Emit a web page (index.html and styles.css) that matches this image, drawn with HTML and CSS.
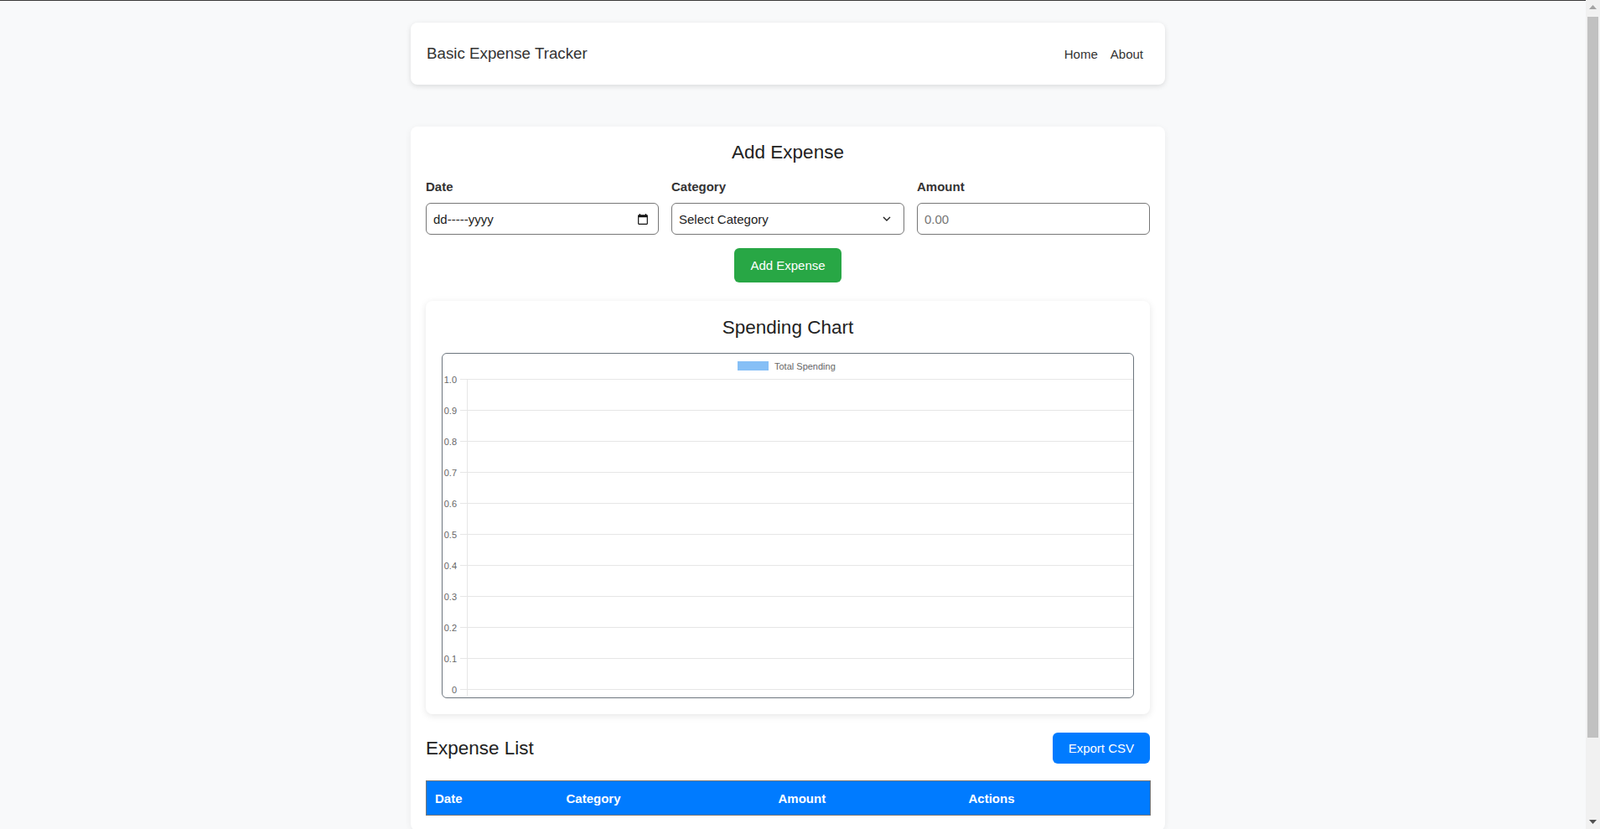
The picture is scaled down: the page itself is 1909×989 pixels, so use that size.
FILE: index.html
```html
<!DOCTYPE html>
<html lang="en">
<head>
<meta charset="utf-8">
<title>Basic Expense Tracker</title>
<link rel="stylesheet" href="styles.css">
</head>
<body>
<div class="topline"></div>
<div class="page">
<div class="container">
  <nav class="navbar">
    <span class="brand">Basic Expense Tracker</span>
    <div class="nav-links"><a href="#">Home</a><a href="#">About</a></div>
  </nav>

  <main class="card">
    <h2 class="section-title">Add Expense</h2>
    <form class="expense-form">
      <div class="fields">
        <div class="field">
          <label>Date</label>
          <div class="input date-input">
            <span>dd-----yyyy</span>
            <svg class="cal-icon" width="12" height="13" viewBox="2 1 20 22" aria-hidden="true"><path d="M20 3h-1V1h-2v2H7V1H5v2H4c-1.1 0-2 .9-2 2v16c0 1.1.9 2 2 2h16c1.1 0 2-.9 2-2V5c0-1.1-.9-2-2-2zm0 18H4V8h16v13z" fill="#111"/></svg>
          </div>
        </div>
        <div class="field">
          <label for="category">Category</label>
          <div class="select-wrap">
            <select id="category" class="input select"><option>Select Category</option></select>
            <svg class="chevron" width="10" height="6" viewBox="0 0 10 6" aria-hidden="true"><path d="M1 1l4 4 4-4" fill="none" stroke="#222" stroke-width="1.4"/></svg>
          </div>
        </div>
        <div class="field">
          <label for="amount">Amount</label>
          <input id="amount" class="input" type="text" placeholder="0.00">
        </div>
      </div>
      <div class="actions"><button class="btn btn-green" type="button">Add Expense</button></div>
    </form>

    <section class="chart-card">
      <h2 class="section-title chart-title">Spending Chart</h2>
      <div class="chart-box">
        <svg class="chart" viewBox="0 0 824 410" preserveAspectRatio="none">
          <rect x="352" y="9" width="37" height="11" fill="#86bff6"/>
          <text x="396" y="18.5" class="legend">Total Spending</text>
          <g class="grid">
            <line x1="21" x2="824" y1="30.5" y2="30.5"/>
            <line x1="21" x2="824" y1="67.5" y2="67.5"/>
            <line x1="21" x2="824" y1="104.5" y2="104.5"/>
            <line x1="21" x2="824" y1="141.5" y2="141.5"/>
            <line x1="21" x2="824" y1="178.5" y2="178.5"/>
            <line x1="21" x2="824" y1="215.5" y2="215.5"/>
            <line x1="21" x2="824" y1="252.5" y2="252.5"/>
            <line x1="21" x2="824" y1="289.5" y2="289.5"/>
            <line x1="21" x2="824" y1="326.5" y2="326.5"/>
            <line x1="21" x2="824" y1="363.5" y2="363.5"/>
            <line x1="21" x2="824" y1="400.5" y2="400.5"/>
            <line x1="29.5" x2="29.5" y1="30" y2="408"/>
          </g>
          <g class="ticks">
            <text x="17" y="34.5">1.0</text>
            <text x="17" y="71.5">0.9</text>
            <text x="17" y="108.5">0.8</text>
            <text x="17" y="145.5">0.7</text>
            <text x="17" y="182.5">0.6</text>
            <text x="17" y="219.5">0.5</text>
            <text x="17" y="256.5">0.4</text>
            <text x="17" y="293.5">0.3</text>
            <text x="17" y="330.5">0.2</text>
            <text x="17" y="367.5">0.1</text>
            <text x="17" y="404.5">0</text>
          </g>
        </svg>
      </div>
    </section>

    <div class="list-header">
      <h2 class="list-title">Expense List</h2>
      <button class="btn btn-blue" type="button">Export CSV</button>
    </div>
    <table class="expense-table">
      <colgroup><col class="c-date"><col class="c-cat"><col class="c-amt"><col class="c-act"></colgroup>
      <thead><tr><th>Date</th><th>Category</th><th>Amount</th><th>Actions</th></tr></thead>
      <tbody></tbody>
    </table>
  </main>
</div>
</div>

<div class="scrollbar" aria-hidden="true">
  <div class="sb-btn"><svg width="9" height="5" viewBox="0 0 9 5"><path d="M0 5L4.5 0 9 5z" fill="#a3a3a3"/></svg></div>
  <div class="sb-track"><div class="sb-thumb"></div></div>
  <div class="sb-btn"><svg width="9" height="5" viewBox="0 0 9 5"><path d="M0 0L4.5 5 9 0z" fill="#505050"/></svg></div>
</div>
</body>
</html>
```

FILE: styles.css
```css
* { box-sizing: border-box; }

html { background: #f8f9fa; }

body {
  margin: 0;
  background: #f8f9fa;
  font-family: "Liberation Sans", Arial, Helvetica, sans-serif;
  font-size: 15px;
  color: #333;
}

.topline { height: 1px; background: #3a3a3a; }

.page { padding-right: 29px; }

.container {
  width: 900px;
  margin: 0 auto;
  padding: 26px 0 102px;
}

/* fake browser scrollbar overlay */
.scrollbar {
  position: fixed;
  top: 0;
  right: 0;
  width: 17px;
  height: 100vh;
  background: #f1f1f1;
  display: flex;
  flex-direction: column;
}
.sb-btn {
  height: 17px;
  display: flex;
  align-items: center;
  justify-content: center;
}
.sb-track { flex: 1; padding: 3px 2px 0; }
.sb-thumb { height: 860px; background: #c1c1c1; }

.navbar {
  height: 74px;
  display: flex;
  align-items: center;
  justify-content: space-between;
  padding: 0 26px 0 19px;
  background: #fff;
  border-radius: 8px;
  box-shadow: 0 2px 6px rgba(0, 0, 0, 0.12);
}

.brand { font-size: 18.75px; color: #333; }

.nav-links { display: flex; gap: 15px; }
.nav-links a { color: #333; text-decoration: none; font-size: 15px; }

.card {
  display: block;
  margin-top: 50px;
  background: #fff;
  border-radius: 8px;
  padding: 18px;
  box-shadow: 0 2px 8px rgba(0, 0, 0, 0.06);
}

.section-title {
  margin: 0 0 19px;
  font-size: 22.5px;
  line-height: 26px;
  font-weight: normal;
  text-align: center;
  color: #222;
}

.fields {
  display: grid;
  grid-template-columns: repeat(3, 1fr);
  gap: 15px;
}

.field label {
  display: block;
  font-weight: bold;
  line-height: 17px;
  margin-bottom: 11px;
  color: #333;
}

.input {
  display: block;
  width: 100%;
  height: 38px;
  margin: 0;
  padding: 0 8px;
  border: 1px solid #767676;
  border-radius: 6px;
  background: #fff;
  font-family: inherit;
  font-size: 15px;
  color: #222;
  outline: none;
}

.input::placeholder { color: #757575; }

.date-input {
  display: flex;
  align-items: center;
  justify-content: space-between;
  padding-right: 12px;
}

.cal-icon { display: block; }

.select-wrap { position: relative; }
.select { appearance: none; -webkit-appearance: none; }
.chevron { position: absolute; right: 16px; top: 16px; pointer-events: none; }

.actions { display: flex; justify-content: center; margin-top: 16px; }

.btn {
  border: none;
  border-radius: 6px;
  color: #fff;
  font-family: inherit;
  font-size: 15px;
  line-height: 17px;
  cursor: pointer;
}

.btn-green { background: #28a745; padding: 12px 19px; }
.btn-blue { background: #007bff; padding: 10px 19px; }

.chart-card {
  margin: 22px 0;
  padding: 19px;
  background: #fff;
  border-radius: 8px;
  box-shadow: 0 2px 8px rgba(0, 0, 0, 0.1);
}

.chart-title { margin-bottom: 17px; }

.chart-box {
  height: 412px;
  border: 1px solid #6c757d;
  border-radius: 6px;
  overflow: hidden;
}

.chart { display: block; width: 100%; height: 410px; }
.chart .grid line { stroke: #e6e6e6; stroke-width: 1; }
.chart text { font-family: "Liberation Sans", Arial, sans-serif; font-size: 11px; fill: #666; }
.chart .ticks text { text-anchor: end; }

.list-header {
  display: flex;
  align-items: center;
  justify-content: space-between;
  margin-bottom: 20px;
}

.list-title {
  margin: 0;
  font-size: 22.5px;
  line-height: 26px;
  font-weight: normal;
  color: #222;
}

.expense-table {
  width: 100%;
  border-collapse: collapse;
  table-layout: fixed;
  border: 1px solid #777;
}

.c-date { width: 157px; }
.c-cat { width: 253px; }
.c-amt { width: 227px; }
.c-act { width: 227px; }

.expense-table th {
  background: #007bff;
  color: #fff;
  text-align: left;
  font-weight: bold;
  line-height: 17px;
  padding: 12px 10px 11px;
}
```
